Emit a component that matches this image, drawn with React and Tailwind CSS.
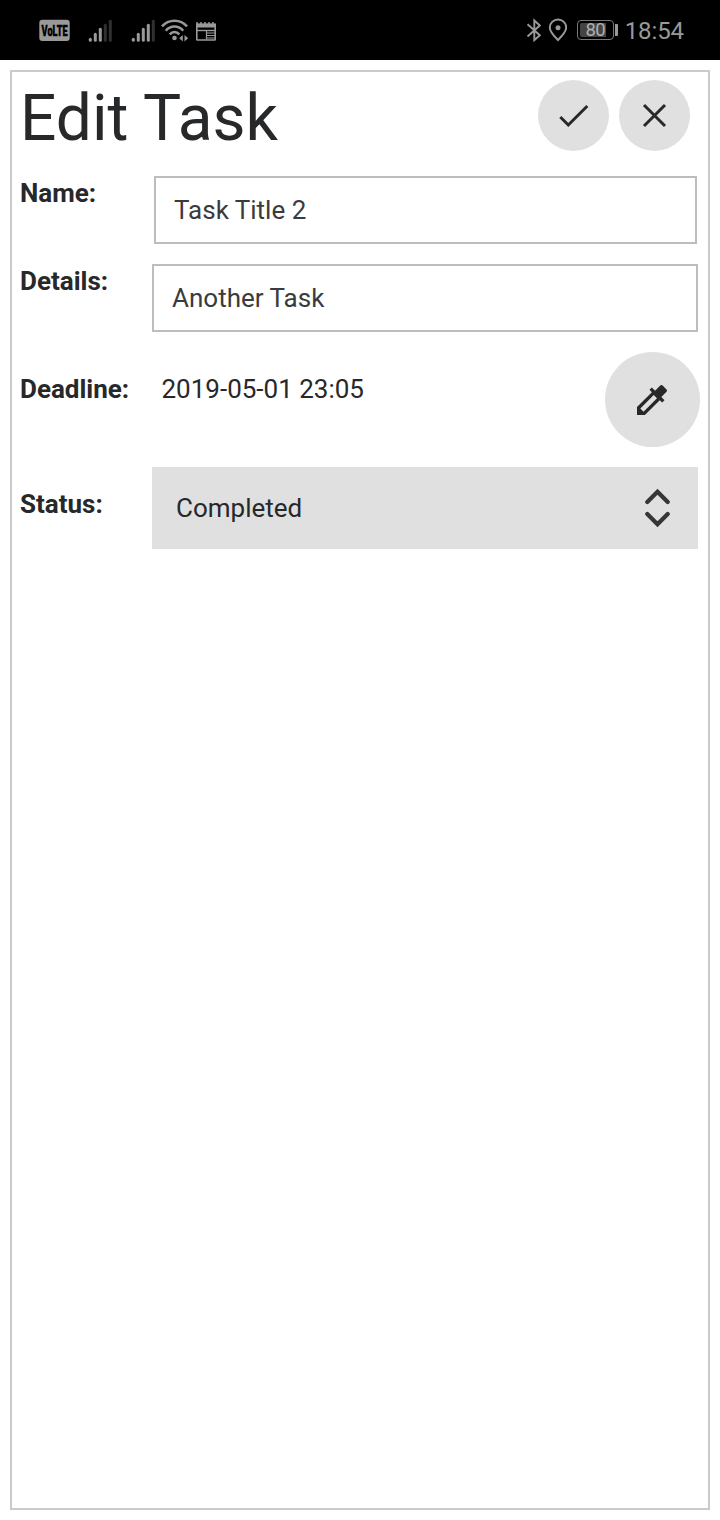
const FONT = "font-['Roboto','Noto_Sans',sans-serif]";

function VolteIcon() {
  return (
    <svg className="ml-[39px] h-[22px] w-[31px] overflow-visible" viewBox="0 0 31 22">
      <rect x="0.3" y="0.7" width="30.4" height="21.300" rx="3" fill="#999" />
      <text x="2.6" y="16.500" fontFamily="Roboto, sans-serif" fontSize="14" fontWeight="900" fill="#000" stroke="#000" strokeWidth="0.4" textLength="26" lengthAdjust="spacingAndGlyphs">VoLTE</text>
    </svg>
  );
}

function SignalIcon({ className, strength }) {
  const heights = [4, 9, 14, 18, 22];
  return (
    <svg className={className} viewBox="0 0 24 23">
      {heights.map((h, i) => (
        <rect key={h} x={0.8 + i * 5} y={22.8 - h} width="3" height={h} rx="1.5" fill={i < strength ? "#999" : "#303030"} />
      ))}
    </svg>
  );
}

function WifiIcon() {
  return (
    <svg className="ml-[6px] h-[24px] w-[28px]" viewBox="0 0 28 24" fill="none" stroke="#999" strokeWidth="2.5">
      <path d="M1 8.400C7.500.7 19.500.7 26 8.400" />
      <path d="M4.800 12.700C9.500 7.200 17.500 7.200 22.200 12.700" />
      <path d="M8.700 16.300C11.500 13.200 15.500 13.200 18.300 16.300" />
      <circle cx="13.500" cy="20" r="2.300" fill="#999" stroke="none" />
      <path d="M21.800 17v6.500L18.200 20.200zM23.500 17v6.500L27.200 20.200z" fill="#999" stroke="none" />
    </svg>
  );
}

function NewsIcon() {
  return (
    <svg className="ml-[7px] mt-[2px] h-[19px] w-[20px]" viewBox="0 0 20 19" fill="none" stroke="#999">
      <rect x="0.800" y="2.500" width="18.400" height="15.500" rx="0.500" strokeWidth="1.600" />
      <path d="M0 1h2M4 1h2M8 1h2M12 1h2M16 1h2" strokeWidth="1.500" />
      <path d="M0 3.500h20" strokeWidth="4" />
      <path d="M1 8.500h18" strokeWidth="1.400" />
      <path d="M10.500 8.500v9" strokeWidth="1.200" />
      <path d="M11 11h8M11 13.500h8M11 16h8" strokeWidth="1.100" />
    </svg>
  );
}

function BluetoothIcon() {
  return (
    <svg className="h-[24px] w-[15px]" viewBox="0 0 15 24" fill="none" stroke="#999" strokeWidth="1.900">
      <path d="M1.500 6.300 13.800 17.200 8.300 22.200V2.500L13.800 7.500 1.500 18.500" />
    </svg>
  );
}

function LocationIcon() {
  return (
    <svg className="ml-[7px] h-[24px] w-[19px]" viewBox="0 0 19 24" fill="none" stroke="#999" strokeWidth="2">
      <path d="M10 22C6.500 18.500 1.800 14.200 1.800 9.500a8.200 8 0 0 1 16.400 0C18.200 14.200 13.500 18.500 10 22Z" />
      <circle cx="10" cy="9.700" r="2.500" fill="#999" stroke="none" />
    </svg>
  );
}

function Battery() {
  return (
    <div className="ml-[10px] flex items-center gap-px">
      <div className="flex h-[20px] w-[37px] rounded-[4px] border-[1.5px] border-[#777] p-[2px]">
        <div className="flex h-full w-[26px] items-center justify-center rounded-l-[2px] bg-[#444]">
          <span className="ml-[5px] text-[18.500px] leading-none tracking-[-0.800px] text-[#b0b0b0]">80</span>
        </div>
      </div>
      <div className="h-[12px] w-[3px] rounded-r-[1px] bg-[#999]" />
    </div>
  );
}

function StatusBar() {
  return (
    <div className="flex h-[60px] items-center justify-between bg-black pr-[36px]">
      <div className="flex items-center">
        <VolteIcon />
        <SignalIcon className="ml-[18px] h-[23px] w-[24px]" strength={3} />
        <SignalIcon className="ml-[19px] h-[23px] w-[24px]" strength={4} />
        <WifiIcon />
        <NewsIcon />
      </div>
      <div className="flex items-center">
        <BluetoothIcon />
        <LocationIcon />
        <Battery />
        <span className="ml-[7px] mt-[2px] text-[24px] leading-[24px] tracking-[-0.1px] text-[#999]">18:54</span>
      </div>
    </div>
  );
}

function Label({ children, className }) {
  return <label className={`w-[132px] shrink-0 font-bold leading-[34px] ${className || ""}`}>{children}</label>;
}

export default function App() {
  return (
    <div className={`flex h-[1520px] w-[720px] flex-col bg-white text-[26px] text-[#27282a] ${FONT}`}>
      <StatusBar />
      <main className="m-[10px] flex flex-1 flex-col gap-5 border-2 border-[#cacaca] pl-2">
        <header className="flex h-[84px] justify-between pr-[18px] pt-2">
          <h1 className="text-[64px] leading-[78px]">Edit Task</h1>
          <div className="flex gap-[10px]">
            <button className="flex h-[71px] w-[71px] items-center justify-center rounded-full bg-[#e0e0e0]" aria-label="Save">
              <svg className="h-[36px] w-[36px]" viewBox="0 0 36 36" fill="none" stroke="#27282a" strokeWidth="3">
                <path d="M4.300 19 12.300 27 31.300 8" />
              </svg>
            </button>
            <button className="flex h-[71px] w-[71px] items-center justify-center rounded-full bg-[#e0e0e0]" aria-label="Close">
              <svg className="h-[36px] w-[36px]" viewBox="0 0 36 36" fill="none" stroke="#27282a" strokeWidth="3">
                <path d="M7 7 28 28M28 7 7 28" />
              </svg>
            </button>
          </div>
        </header>
        <div className="flex h-[68px] pr-[11px]">
          <Label>Name:</Label>
          <div className="ml-[2px] flex flex-1 items-center border-2 border-[#bdbdbd] pl-[18px] text-[#3a3b3c]">Task Title 2</div>
        </div>
        <div className="flex h-[68px] pr-[10px]">
          <Label>Details:</Label>
          <div className="flex flex-1 items-center border-2 border-[#bdbdbd] pl-[18px] text-[#3a3b3c]">Another Task</div>
        </div>
        <div className="flex h-[95px] pr-2">
          <Label className="pt-5">Deadline:</Label>
          <span className="flex-1 pl-[9.500px] pt-5 leading-[34px]">2019-05-01 23:05</span>
          <button className="flex h-[95px] w-[95px] items-center justify-center rounded-full bg-[#e0e0e0]" aria-label="Edit deadline">
            <svg className="mr-px h-[40px] w-[40px]" viewBox="0 0 24 24" fill="#27282a">
              <path d="M20.710 5.630l-2.340-2.340a1 1 0 0 0-1.410 0l-3.120 3.120-1.930-1.910-1.410 1.410 1.420 1.420L3 16.250V21h4.750l8.920-8.920 1.420 1.420 1.410-1.410-1.920-1.920 3.120-3.120c.4-.4.4-1.030.010-1.420zM6.920 19L5 17.080l8.060-8.060 1.920 1.920L6.920 19z" />
            </svg>
          </button>
        </div>
        <div className="flex h-[82px] pr-[10px]">
          <Label className="pt-5">Status:</Label>
          <button className="flex flex-1 items-center justify-between bg-[#e0e0e0] pl-6 pr-[26px]">
            <span>Completed</span>
            <svg className="h-[40px] w-[28px]" viewBox="0 0 28 40" fill="none" stroke="#353638" strokeWidth="4.200" strokeLinecap="round">
              <path d="M3.300 14 13.500 3.700 23.700 14M3.300 26 13.500 36.300 23.700 26" />
            </svg>
          </button>
        </div>
      </main>
    </div>
  );
}
